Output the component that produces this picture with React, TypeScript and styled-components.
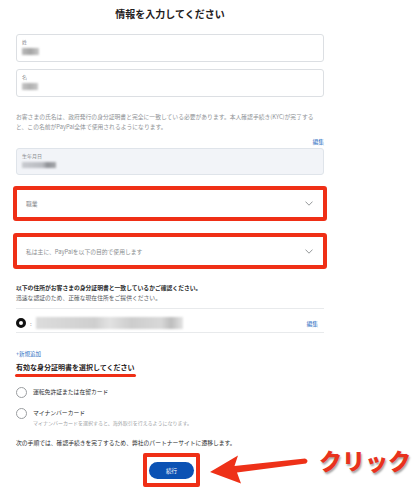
import React from 'react';
import styled, { createGlobalStyle } from 'styled-components';

const GlobalStyle = createGlobalStyle`
  body {
    margin: 0;
    background: #fff;
    font-family: "Noto Sans CJK JP", "Noto Sans", sans-serif;
    color: #2c2e2f;
  }
`;

const RED = '#ef2f16';
const BLUE = '#2a6ec2';

const Page = styled.div`
  width: 414px;
  height: 490px;
  overflow: hidden;
`;

const Column = styled.div`
  width: 308px;
  margin-left: 16px;
  display: flex;
  flex-direction: column;
`;

const Title = styled.h1`
  margin: 9px 0 15px;
  font-size: 10px;
  line-height: 10px;
  font-weight: 700;
  text-align: center;
  color: #1f2021;
`;

const Field = styled.div<{ $filled?: boolean; $gap?: number }>`
  height: 28px;
  box-sizing: border-box;
  border: 1px solid ${p => (p.$filled ? '#dfe4ea' : '#dcdfe3')};
  background: ${p => (p.$filled ? '#f2f4f8' : '#fff')};
  border-radius: 3px;
  padding: 4px 5px 0;
  margin-top: ${p => p.$gap ?? 0}px;
  display: flex;
  flex-direction: column;
  gap: 3px;
`;

const FieldLabel = styled.span`
  font-size: 5px;
  line-height: 6px;
  color: #8a8d90;
`;

const Blur = styled.span<{ $w: number; $h: number; $tone?: string }>`
  display: block;
  width: ${p => p.$w}px;
  height: ${p => p.$h}px;
  background: ${p => p.$tone ?? 'linear-gradient(90deg, #b9b9b9 0%, #a4a4a4 50%, #c9c9c9 100%)'};
  filter: blur(0.8px);
`;

const Helper = styled.p`
  margin: 15px 0 0;
  font-size: 5.8px;
  line-height: 10px;
  color: #8f9397;
`;

const EditLink = styled.a<{ $right?: boolean }>`
  font-size: 5.8px;
  line-height: 8px;
  color: ${BLUE};
  text-decoration: none;
  align-self: flex-end;
  margin: 6px 0 2px;
`;

const Highlight = styled.div<{ $gap: number; $h: number }>`
  margin: ${p => p.$gap}px -3px 0 -3px;
  height: ${p => p.$h}px;
  box-sizing: border-box;
  border: 4px solid ${RED};
  border-radius: 3px;
  display: flex;
`;

const Select = styled.div`
  flex: 1;
  background: #fff;
  display: flex;
  align-items: center;
  justify-content: space-between;
  padding: 0 10px 0 9px;
  font-size: 5.8px;
  color: #8a8d90;
`;

const Chevron = () => (
  <svg width="8" height="5" viewBox="0 0 8 5">
    <polyline points="0.5,0.6 4,4.2 7.5,0.6" fill="none" stroke="#7a7d80" strokeWidth="0.8" />
  </svg>
);

const AddressIntro = styled.div`
  margin-top: 14px;
  font-size: 5.8px;
  line-height: 10px;
  color: #55595d;
  strong {
    display: block;
    color: #2c2e2f;
    font-weight: 700;
  }
`;

const AddressRow = styled.div`
  margin-top: 5px;
  height: 25px;
  box-sizing: border-box;
  border-top: 1px solid #e8eaec;
  border-bottom: 1px solid #e8eaec;
  display: flex;
  align-items: center;
  padding-top: 5px;
  gap: 4px;
  font-size: 6px;
  color: #888;
`;

const Radio = styled.span<{ $checked?: boolean }>`
  width: 10px;
  height: 10px;
  box-sizing: border-box;
  border-radius: 50%;
  flex-shrink: 0;
  border: ${p => (p.$checked ? '3px solid #111' : '1px solid #9a9da0')};
  background: #fff;
`;

const AddressEdit = styled.a`
  margin-left: auto;
  margin-right: 6px;
  font-size: 5.8px;
  color: ${BLUE};
`;

const AddNew = styled.a`
  margin-top: 17px;
  font-size: 5.5px;
  line-height: 8px;
  color: ${BLUE};
`;

const IdHeading = styled.h2`
  margin: 5px 0 0;
  font-size: 7px;
  line-height: 9px;
  font-weight: 700;
  color: #1f2021;
  align-self: flex-start;
`;

const Underline = styled.span`
  display: block;
  width: 121px;
  height: 3px;
  margin: 2px 0 0 -1px;
  border-radius: 2px;
  background: ${RED};
`;

const Option = styled.div<{ $gap: number }>`
  margin-top: ${p => p.$gap}px;
  display: flex;
  align-items: flex-start;
  gap: 6px;
`;

const OptionText = styled.div`
  font-size: 5.8px;
  line-height: 12px;
  color: #2c2e2f;
  small {
    display: block;
    font-size: 5px;
    line-height: 7px;
    color: #a0a3a6;
  }
`;

const OptionRadio = styled(Radio)`
  width: 11px;
  height: 11px;
  margin: 0.5px 0 0 0;
`;

const Note = styled.p`
  margin: 13px 0 0;
  font-size: 5.8px;
  line-height: 8px;
  color: #2c2e2f;
`;

const ActionRow = styled.div`
  position: relative;
  margin-top: 6px;
  display: flex;
`;

const ButtonFrame = styled.div`
  margin-left: 127px;
  border: 4px solid ${RED};
  border-radius: 2px;
  padding: 5px 2px 4px;
  background: #fff;
`;

const ContinueButton = styled.button`
  width: 45px;
  height: 17px;
  border: none;
  border-radius: 9px;
  background: #0b52b4;
  color: #fff;
  font-family: inherit;
  font-size: 5.5px;
  padding: 0;
  display: block;
`;

const Arrow = styled.svg`
  position: absolute;
  left: 184px;
  top: -8px;
`;

const ClickLabel = styled.span`
  position: absolute;
  left: 303px;
  top: -5px;
  font-size: 23px;
  line-height: 25px;
  font-weight: 900;
  color: #e8321d;
  -webkit-text-stroke: 3px #fff;
  paint-order: stroke fill;
  text-shadow: 1px 2px 2px rgba(0, 0, 0, 0.35);
  letter-spacing: 0;
  white-space: nowrap;
`;

export default function App() {
  return (
    <Page>
      <GlobalStyle />
      <Column>
        <Title>情報を入力してください</Title>

        <Field>
          <FieldLabel>姓</FieldLabel>
          <Blur $w={17} $h={7} />
        </Field>
        <Field $gap={7}>
          <FieldLabel>名</FieldLabel>
          <Blur $w={16} $h={7} $tone="linear-gradient(90deg,#c4c4c4,#b0b0b0,#c8c8c8)" />
        </Field>

        <Helper>
          お客さまの氏名は、政府発行の身分証明書と完全に一致している必要があります。本人確認手続き(KYC)が完了する
          <br />
          と、この名前がPayPal全体で使用されるようになります。
        </Helper>

        <EditLink>編集</EditLink>
        <Field $filled style={{ height: 27 }}>
          <FieldLabel>生年月日</FieldLabel>
          <Blur $w={34} $h={6} $tone="linear-gradient(90deg,#c9cbd0 0%,#b9bbc0 60%,#8f9196 75%,#a7a9ad 100%)" />
        </Field>

        <Highlight $gap={11} $h={35}>
          <Select>
            職業
            <Chevron />
          </Select>
        </Highlight>
        <Highlight $gap={12} $h={36}>
          <Select>
            私は主に、PayPalを以下の目的で使用します
            <Chevron />
          </Select>
        </Highlight>

        <AddressIntro>
          <strong>以下の住所がお客さまの身分証明書と一致しているかご確認ください。</strong>
          迅速な認証のため、正確な現在住所をご提供ください。
        </AddressIntro>

        <AddressRow>
          <Radio $checked />
          :
          <Blur
            $w={147}
            $h={12}
            $tone="linear-gradient(90deg,#dcdcdc 0%,#cfcfcf 40%,#e2e2e2 50%,#cdcdcd 65%,#d8d8d8 85%,#bdbdbd 92%,#e5e5e5 100%)"
          />
          <AddressEdit>編集</AddressEdit>
        </AddressRow>

        <AddNew>+新規追加</AddNew>
        <IdHeading>
          有効な身分証明書を選択してください
          <Underline />
        </IdHeading>

        <Option $gap={9}>
          <OptionRadio />
          <OptionText>運転免許証または在留カード</OptionText>
        </Option>
        <Option $gap={9}>
          <OptionRadio />
          <OptionText>
            マイナンバーカード
            <small>マイナンバーカードを選択すると、海外取引を行えるようになります。</small>
          </OptionText>
        </Option>

        <Note>次の手順では、確認手続きを完了するため、弊社のパートナーサイトに遷移します。</Note>

        <ActionRow>
          <ButtonFrame>
            <ContinueButton>続行</ContinueButton>
          </ButtonFrame>
          <Arrow width="112" height="45" viewBox="200 445 112 45">
            <path
              d="M210,472 L238,455.5 L234.5,466 L305,458.5 Q309.5,460.5 306,463.5 L237,472.5 L241,483.5 Z"
              fill="#ee3118"
            />
          </Arrow>
          <ClickLabel>クリック</ClickLabel>
        </ActionRow>
      </Column>
    </Page>
  );
}
